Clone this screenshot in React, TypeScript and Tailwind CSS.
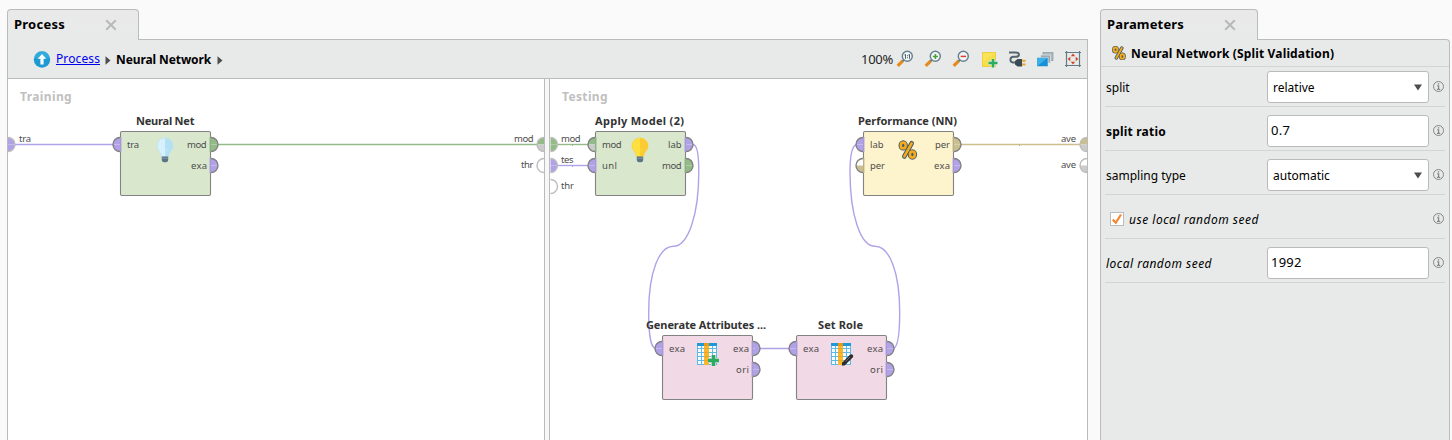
import type { ReactNode } from "react";

const PURPLE = "#b1a2e8";
const GREEN = "#93bb87";
const TAN = "#c9bf8f";
const GRAY = "#cbcbcb";
const WHITE = "#ffffff";

type PortProps = {
  x: number;
  y: number;
  side: "left" | "right";
  top: string;
  bottom?: string;
  edge?: boolean;
};

/** Half-disc connector; `side` is the direction in which it bulges. */
function Port({ x, y, side, top, bottom = top, edge = false }: PortProps) {
  const r = 7;
  const s = side === "left" ? -1 : 1;
  const sweepTop = side === "left" ? 0 : 1;
  return (
    <g>
      <path d={`M${x} ${y - r} A${r} ${r} 0 0 ${sweepTop} ${x + s * r} ${y} H${x} Z`} fill={top} />
      <path d={`M${x} ${y + r} A${r} ${r} 0 0 ${1 - sweepTop} ${x + s * r} ${y} H${x} Z`} fill={bottom} />
      <path
        d={`M${x} ${y - r} A${r} ${r} 0 0 ${sweepTop} ${x} ${y + r}`}
        fill="none"
        stroke={edge ? "#bcbcbc" : "#808080"}
        strokeWidth={1.4}
      />
      {!edge && (
        <rect x={side === "left" ? x : x - 1.6} y={y - 7.5} width={1.6} height={15} fill={top === WHITE ? bottom : top} opacity={0.75} />
      )}
    </g>
  );
}

type LabelProps = { x: number; y: number; w: number; children: string };

function Label({ x, y, w, children }: LabelProps) {
  return (
    <text x={x} y={y} textLength={w} className="fill-[#4d4d4d] text-[9.5px] font-normal">
      {children}
    </text>
  );
}

type NodeProps = {
  x: number;
  y: number;
  fill: string;
  title: string;
  titleX: number;
  titleW: number;
  children: ReactNode;
};

function OperatorNode({ x, y, fill, title, titleX, titleW, children }: NodeProps) {
  return (
    <g>
      <text x={titleX} y={y - 6.5} textLength={titleW} className="fill-[#333333] text-[11px] font-bold">
        {title}
      </text>
      <rect x={x + 0.5} y={y + 0.5} width={90} height={64} rx={1.5} fill={fill} stroke="#828282" strokeWidth={1.1} />
      {children}
    </g>
  );
}

function Bulb({ x, y, main, shade }: { x: number; y: number; main: string; shade: string }) {
  return (
    <g transform={`translate(${x} ${y})`}>
      <path d="M-8 -4 a8 8 0 0 1 16 0 c0 4.6 -4.2 5.5 -4.5 10.5 h-7 c-0.3 -5 -4.5 -5.9 -4.5 -10.5z" fill={main} stroke={shade} strokeWidth={0.6} />
      <path d="M0 -12 a8 8 0 0 1 8 8 c0 4.6 -4.2 5.5 -4.5 10.5 h-3.500z" fill={shade} />
      <path d="M-3.200 -1.500 L0 0.300 L3.200 -1.500 M0 0.300 V6" fill="none" stroke={main} strokeWidth={0.8} opacity={0.7} />
      <path d="M-3.200 6.500 h6.400 v3.500 q0 2 -2 2.300 h-2.400 q-2 -0.300 -2 -2.300z" fill="#587486" />
      <path d="M-3.200 8.300 h6.400" stroke="#83a0ae" strokeWidth={0.8} />
    </g>
  );
}

function PercentGlyph() {
  return (
    <g fill="none" strokeLinecap="round">
      <g stroke="#4a5c66" strokeWidth={5}>
        <ellipse cx={5} cy={5.2} rx={2.5} ry={3} />
        <ellipse cx={14.8} cy={14.9} rx={2.5} ry={3} />
        <path d="M14 3 L6.200 17" />
      </g>
      <g stroke="#f5ab1c" strokeWidth={2.700}>
        <ellipse cx={5} cy={5.2} rx={2.6} ry={3.1} />
        <ellipse cx={14.8} cy={14.9} rx={2.6} ry={3.1} />
        <path d="M14 3 L6.200 17" />
      </g>
    </g>
  );
}

function TableGlyph({ x, y }: { x: number; y: number }) {
  return (
    <g transform={`translate(${x} ${y})`}>
      <rect width={20} height={22} fill="#fafdff" />
      <path d="M0.500 0 V22 M4.500 0 V22 M15.500 0 V22 M19.500 0 V22 M0 5.500 H20 M0 9.500 H20 M0 13.500 H20 M0 17.500 H20 M0 21.500 H20" stroke="#3fb0e3" strokeWidth={1} opacity={0.85} />
      <rect width={20} height={3} fill="#1d9ad6" />
      <rect x={7} y={2} width={5} height={20} fill="#fbb72b" />
      <rect x={7} y={0} width={5} height={3} fill="#e99a12" />
      <path d="M7 5.500 h5 M7 9.500 h5 M7 13.500 h5 M7 17.500 h5" stroke="#f0a01c" strokeWidth={0.8} />
    </g>
  );
}

function Diagram() {
  return (
    <svg viewBox="8 79 1079 361" width={1079} height={361} className="absolute inset-0 font-['Noto_Sans',sans-serif] tracking-normal">
      <g fill="none" stroke={PURPLE} strokeWidth={1.4}>
        <path d="M15 144.500 H114" />
        <path d="M557 165.500 H589" />
        <path d="M755 348.500 H790" />
        <path d="M693 144.500 C697 144.500 698.800 156 698.800 172 C698.800 215 688 246.300 673.500 246.300 C659 246.300 648.700 272 648.700 312 C648.700 338 651 348 656 348.500" />
        <path d="M857 144.500 C852 145 850 156 850 172 C850 215 860.500 246.300 875 246.300 C889.500 246.300 899.700 272 899.700 312 C899.700 338 897.500 348 893 348.500" />
      </g>
      <g fill="none" stroke={GREEN} strokeWidth={1.4}>
        <path d="M217 144.500 H538" />
        <path d="M557 144.500 H589" />
      </g>
      <path d="M960 144.500 H1080" stroke="#ccc08c" strokeWidth={1.4} />
      <path d="M572.500 145 v1 M1019.500 145 v1" stroke="#a9a98c" strokeWidth={1} />
      <path d="M572.500 166 v1" stroke={PURPLE} strokeWidth={1} />

      <Port edge x={8} y={144.5} side="right" top={PURPLE} />
      <Port edge x={544} y={144.5} side="left" top={GREEN} bottom={GRAY} />
      <Port edge x={544} y={165.5} side="left" top={WHITE} />
      <Port edge x={550.5} y={144.5} side="right" top={GREEN} />
      <Port edge x={550.5} y={165.5} side="right" top={PURPLE} />
      <Port edge x={550.5} y={186.5} side="right" top={WHITE} />
      <Port edge x={1087} y={144.5} side="left" top={TAN} bottom={GRAY} />
      <Port edge x={1087} y={165.5} side="left" top={WHITE} bottom={GRAY} />
      <Label x={19} y={142} w={12}>tra</Label>
      <Label x={514} y={142} w={19.500}>mod</Label>
      <Label x={521} y={168} w={12.500}>thr</Label>
      <Label x={561} y={142} w={19.500}>mod</Label>
      <Label x={561} y={163} w={12.500}>tes</Label>
      <Label x={561} y={189} w={13}>thr</Label>
      <Label x={1061} y={142} w={15}>ave</Label>
      <Label x={1061} y={168} w={15}>ave</Label>

      <OperatorNode x={120} y={131} fill="#d9e8cd" title="Neural Net" titleX={136} titleW={58.5}>
        <Port x={120} y={144.5} side="left" top={PURPLE} />
        <Port x={211} y={144.5} side="right" top={GREEN} />
        <Port x={211} y={165.5} side="right" top={PURPLE} />
        <Bulb x={165} y={150} main="#d6f0fc" shade="#b4e0f4" />
        <Label x={127} y={147.500} w={12}>tra</Label>
        <Label x={187} y={147.500} w={19.500}>mod</Label>
        <Label x={191} y={168.500} w={16}>exa</Label>
      </OperatorNode>

      <OperatorNode x={595} y={131} fill="#d9e8cd" title="Apply Model (2)" titleX={595} titleW={89}>
        <Port x={595} y={144.5} side="left" top={GREEN} bottom={GRAY} />
        <Port x={595} y={165.5} side="left" top={PURPLE} />
        <Port x={686} y={144.5} side="right" top={PURPLE} />
        <Port x={686} y={165.5} side="right" top={GREEN} />
        <Bulb x={640} y={150} main="#ffe03f" shade="#fbcb31" />
        <Label x={602} y={147.500} w={19.500}>mod</Label>
        <Label x={602} y={168.500} w={15}>unl</Label>
        <Label x={668} y={147.500} w={13.500}>lab</Label>
        <Label x={662} y={168.500} w={19.500}>mod</Label>
      </OperatorNode>

      <OperatorNode x={863} y={131} fill="#fdf4cd" title="Performance (NN)" titleX={858} titleW={99}>
        <Port x={863} y={144.5} side="left" top={PURPLE} />
        <Port x={863} y={165.5} side="left" top={WHITE} bottom={TAN} />
        <Port x={954} y={144.5} side="right" top={TAN} />
        <Port x={954} y={165.5} side="right" top={PURPLE} />
        <g transform="translate(898.500 140.500) scale(0.940)">
          <PercentGlyph />
        </g>
        <Label x={870} y={147.500} w={13.500}>lab</Label>
        <Label x={870} y={168.500} w={15}>per</Label>
        <Label x={935} y={147.500} w={15}>per</Label>
        <Label x={934} y={168.500} w={16}>exa</Label>
      </OperatorNode>

      <OperatorNode x={662} y={335} fill="#f1d9e6" title="Generate Attributes ..." titleX={646} titleW={120}>
        <Port x={662} y={348.5} side="left" top={PURPLE} />
        <Port x={753} y={348.5} side="right" top={PURPLE} />
        <Port x={753} y={369.5} side="right" top={PURPLE} />
        <TableGlyph x={697} y={343} />
        <path d="M713.500 355 v11 M708 360.500 h11" stroke="#f1d9e6" strokeWidth={5} />
        <path d="M713.500 355 v11 M708 360.500 h11" stroke="#27ae60" strokeWidth={3.4} />
        <Label x={669} y={351.500} w={16}>exa</Label>
        <Label x={733} y={351.500} w={16}>exa</Label>
        <Label x={736} y={372.500} w={13}>ori</Label>
      </OperatorNode>

      <OperatorNode x={796} y={335} fill="#f1d9e6" title="Set Role" titleX={818} titleW={45}>
        <Port x={796} y={348.5} side="left" top={PURPLE} />
        <Port x={887} y={348.5} side="right" top={PURPLE} />
        <Port x={887} y={369.5} side="right" top={PURPLE} />
        <TableGlyph x={831} y={343} />
        <path d="M844 363.500 L851.300 356.200" stroke="#2c2c2c" strokeWidth={3.800} strokeLinecap="round" />
        <path d="M841.800 365.800 l0.800 -3.600 l3 2.600z" fill="#2c2c2c" />
        <path d="M845.500 361.500 L850 357" stroke="#8a8a8a" strokeWidth={0.7} />
        <Label x={803} y={351.500} w={16}>exa</Label>
        <Label x={867} y={351.500} w={16}>exa</Label>
        <Label x={870} y={372.500} w={13}>ori</Label>
      </OperatorNode>
    </svg>
  );
}

function Magnifier({ children }: { children: ReactNode }) {
  return (
    <svg width={18} height={18} viewBox="0 0 18 18" fill="none">
      <path d="M1.700 15.900 L7 10.600" stroke="#e58b1e" strokeWidth={3.200} />
      <path d="M6.400 11.200 L8 9.600" stroke="#5f7884" strokeWidth={1.600} />
      <circle cx={11.300} cy={6.300} r={5} fill="#f2f6f7" stroke="#68828e" strokeWidth={1.500} />
      {children}
    </svg>
  );
}

function ToolbarIcons() {
  return (
    <div className="flex items-center gap-2.5">
      <Magnifier>
        <path d="M9.500 4.200 v4.600 M13.500 4.200 v4.600 M8.500 5 h1 M12.500 5 h1 M11.500 5.200 v1 M11.500 7.200 v1" stroke="#56656c" strokeWidth={1} />
      </Magnifier>
      <Magnifier>
        <path d="M11.400 3.900 v5 M8.900 6.400 h5" stroke="#45a02f" strokeWidth={1.500} />
      </Magnifier>
      <Magnifier>
        <path d="M8.700 6.400 h5.400" stroke="#d9412c" strokeWidth={1.500} />
      </Magnifier>
      <svg width={18} height={18} viewBox="0 0 18 18" fill="none">
        <rect x={2.500} y={2.500} width={13} height={14} fill="#f9e357" stroke="#efcf3f" />
        <path d="M3 12 L15 3 V16 H3z" fill="#f5db45" opacity={0.6} />
        <path d="M13 9 v8.500 M8.500 13 h9" stroke="#e8eae9" strokeWidth={4} />
        <path d="M13 9 v8.500 M8.500 13 h9" stroke="#27ae60" strokeWidth={2.600} />
      </svg>
      <svg width={18} height={18} viewBox="0 0 18 18" fill="none">
        <path d="M1 2.500 H7.500 C12 2.500 12 6.800 8 6.800 H5.500 C1.500 6.800 1.500 12 5 12.500 H9" stroke="#56646d" strokeWidth={2} />
        <path d="M9.500 9 h4.500 v7.500 h-4.500 l-2.500 -2 v-3.500z" fill="#3c4a54" />
        <path d="M14 10.800 h3.600 M14 14.600 h3.600" stroke="#e9a83a" strokeWidth={2} />
      </svg>
      <svg width={18} height={18} viewBox="0 0 18 18" fill="none">
        <rect x={7} y={2.500} width={10} height={8} fill="#adb8bd" stroke="#93a1a8" strokeWidth={0.800} />
        <rect x={4.500} y={5} width={10} height={8} fill="#9cabb2" stroke="#dfe4e6" strokeWidth={0.800} />
        <rect x={1} y={7.500} width={11} height={9} fill="#1590d4" stroke="#e8eae9" strokeWidth={0.500} />
        <path d="M1.500 16 V8 H11.500z" fill="#3cb0ea" />
      </svg>
      <svg width={18} height={18} viewBox="0 0 18 18" fill="none">
        <path d="M2.500 1 V17 M15.500 1 V17 M1 2.500 H17 M1 15.500 H17" stroke="#637a88" strokeWidth={1.200} />
        <path d="M9 3.600 l2.200 2.700 h-4.400z M9 14.400 l2.200 -2.700 h-4.400z M3.600 9 l2.700 -2.200 v4.400z M14.400 9 l-2.700 -2.200 v4.400z" fill="#cf452b" />
      </svg>
    </div>
  );
}

function Tab({ title, className }: { title: string; className: string }) {
  return (
    <div className={`relative z-10 -mb-px flex h-[31px] items-center rounded-t border border-b-0 border-[#bbbbbb] bg-linear-to-b from-[#e9e9e9] to-[#e8eae9] pl-1.5 text-[13px] font-bold ${className}`}>
      <span>{title}</span>
      <svg width={12} height={12} viewBox="0 0 12 12" className="-mt-px ml-auto">
        <path d="M1.200 1.200 L10.800 10.800 M10.800 1.200 L1.200 10.800" stroke="#b9b9b9" strokeWidth={2} />
      </svg>
    </div>
  );
}

function Caret() {
  return (
    <svg width={6} height={9} viewBox="0 0 6 9">
      <path d="M0.500 0.300 L5.500 4.500 L0.500 8.700z" fill="#4d4d4d" />
    </svg>
  );
}

function ProcessPanel() {
  return (
    <section className="flex w-[1081px] flex-col">
      <Tab title="Process" className="w-[132px] pr-[21px] tracking-[0.25px]" />
      <div className="flex flex-1 flex-col border-x border-t border-[#bbbbbb] bg-[#e8eae9]">
        <div className="flex h-[39px] shrink-0 items-center border-b border-[#bbbbbb] pl-[25px] pr-[5px] pt-0.5">
          <svg width={18} height={18} viewBox="0 0 18 18">
            <circle cx={9} cy={8.5} r={8.2} fill="#1d9ad3" />
            <path d="M1.500 6.500 a7.700 7.700 0 0 1 15 0 q-7.500 4 -15 0z" fill="#3bb2e2" opacity={0.7} />
            <path d="M9 3 L13.200 7.800 H10.600 V13.500 H7.400 V7.800 H4.800z" fill="#fff" />
          </svg>
          <a className="-mt-0.5 ml-[5px] text-[12px] tracking-[0.11px] text-[#0000ee] underline">Process</a>
          <span className="ml-[5px] flex"><Caret /></span>
          <b className="ml-[5px] w-[96px] whitespace-nowrap text-[12px] tracking-[-0.1px]">Neural Network</b>
          <span className="ml-[5px] flex"><Caret /></span>
          <span className="ml-auto mr-[3px] text-[13px] tracking-[-0.28px] text-[#222222]">100%</span>
          <div className="-mt-0.5"><ToolbarIcons /></div>
        </div>
        <div className="relative flex flex-1 overflow-hidden text-[12px] font-bold leading-4 text-[#c0c0c0]">
          <div className="w-[537px] border-r border-[#bbbbbb] bg-white pl-3 pt-[10px] tracking-[0.38px]">Training</div>
          <div className="w-1 bg-[#f7f7f7]" />
          <div className="flex-1 border-l border-[#bbbbbb] bg-white pl-3 pt-[10px] tracking-[0.36px]">Testing</div>
          <Diagram />
        </div>
      </div>
    </section>
  );
}

function Info() {
  return (
    <svg width={12} height={12} viewBox="0 0 12 12" className="ml-[3px] shrink-0" fill="none" stroke="#858585">
      <circle cx={6.5} cy={5.5} r={5} strokeWidth={1} />
      <path d="M5.200 4.800 H6.600 V8 M5 8.300 H8.200" strokeWidth={1.200} />
      <path d="M5.800 2.900 H7.200" strokeWidth={1.300} />
    </svg>
  );
}

function Row({ label, children }: { label: ReactNode; children?: ReactNode }) {
  return (
    <div className="mx-1 flex h-11 items-center border-b border-[#d3d5d4] pb-[3px] pt-2">
      <div className="w-[162px] whitespace-nowrap pl-px pt-0.5 text-[12px]">{label}</div>
      {children ?? <div className="w-[162px]" />}
      <Info />
    </div>
  );
}

function Select({ value }: { value: string }) {
  return (
    <div className="flex h-8 w-[162px] items-center justify-between rounded-[3px] border border-[#bbbbbb] bg-white pl-[5px] pr-1.5 text-[12px]">
      <span className="pt-0.5">{value}</span>
      <svg width={8} height={7} viewBox="0 0 8 7">
        <path d="M0 0.500 H8 L4 6.500z" fill="#4d4d4d" />
      </svg>
    </div>
  );
}

function Field({ value }: { value: string }) {
  return (
    <div className="flex h-8 w-[162px] items-center rounded-[3px] border border-[#bbbbbb] bg-white pl-[3px] text-[13px] tracking-[0.25px]">
      {value}
    </div>
  );
}

function ParametersPanel() {
  return (
    <section className="ml-3 flex w-[350px] flex-col">
      <Tab title="Parameters" className="w-[158px] pr-[21px] tracking-[0.16px]" />
      <div className="flex-1 rounded-tr-sm border-x border-t border-[#bbbbbb] bg-[#e8eae9]">
        <div className="flex h-[27px] items-center border-b border-[#d3d5d4] pl-[11px]">
          <svg width={14} height={14} viewBox="0 0 20 20">
            <PercentGlyph />
          </svg>
          <h2 className="ml-[5px] pt-0.5 text-[12px] font-bold tracking-[0.15px]">Neural Network (Split Validation)</h2>
        </div>
        <div className="-mt-1">
          <Row label="split"><Select value="relative" /></Row>
          <Row label={<b className="tracking-[0.2px]">split ratio</b>}><Field value="0.7" /></Row>
          <Row label="sampling type"><Select value="automatic" /></Row>
          <Row
            label={
              <div className="flex items-center pl-1">
                <span className="-mt-0.5 flex size-3.5 items-center justify-center border border-[#bbbbbb] bg-white">
                  <svg width={12} height={12} viewBox="0 0 12 12">
                    <path d="M1.800 6.500 L4.800 9.800 L10 1.500" fill="none" stroke="#f58634" strokeWidth={2.200} />
                  </svg>
                </span>
                <i className="ml-[5px] tracking-[0.51px]">use local random seed</i>
              </div>
            }
          />
          <Row label={<i className="tracking-[0.47px]">local random seed</i>}><Field value="1992" /></Row>
        </div>
      </div>
    </section>
  );
}

export default function App() {
  return (
    <main className="flex h-[440px] w-[1452px] overflow-hidden bg-[#fafafa] pl-[7px] pt-[9px] font-['Noto_Sans',sans-serif] text-black">
      <ProcessPanel />
      <ParametersPanel />
    </main>
  );
}
